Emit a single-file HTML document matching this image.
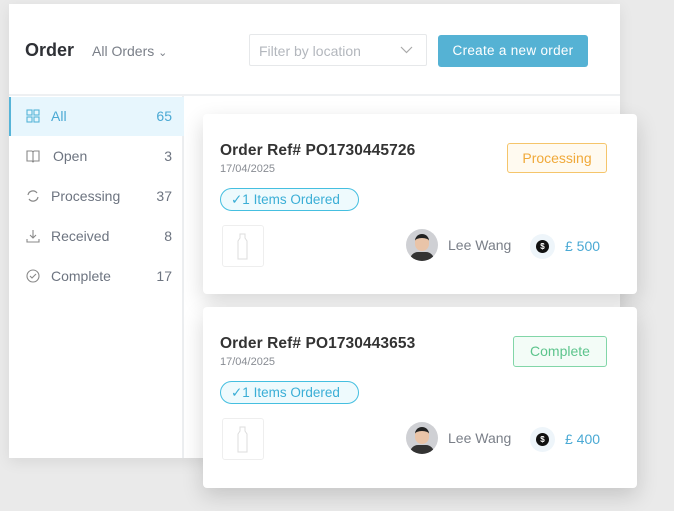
<!DOCTYPE html>
<html><head><style>
*{margin:0;padding:0;box-sizing:border-box}
body{width:674px;height:511px;background:#eaeaea;font-family:"Liberation Sans",sans-serif;position:relative;overflow:hidden}
.abs{position:absolute}
.panel{left:9px;top:4px;width:611px;height:454px;background:#fff;box-shadow:0 4px 14px rgba(0,0,0,.08)}
.hdr{left:0;top:0;width:611px;height:92px;border-bottom:2px solid #eef0f2}
.side{left:0;top:92px;width:175px;height:362px;border-right:2px solid #eceef0}
.item{position:absolute;left:0;width:175px;height:39px;font-size:14px;color:#6d7480}
.item .ic{position:absolute;left:17px;top:12px;width:14px;height:14px}
.item .lb{position:absolute;left:42px;top:11px}
.item .ct{position:absolute;right:12px;top:11px}
.card{left:203px;width:434px;background:#fff;border-radius:4px;box-shadow:0 8px 22px rgba(0,0,0,.16)}
.ref{position:absolute;left:17px;top:28px;font-size:15.5px;color:#333;font-weight:bold;letter-spacing:.1px}
.date{position:absolute;left:17px;top:49px;font-size:11px;color:#888c93}
.pill{position:absolute;left:17px;top:74px;width:139px;height:23px;border:1px solid #45bfe0;background:#eefafd;border-radius:12px;color:#3aaed6;font-size:13.5px;padding:3px 0 0 10px}
.bottle{position:absolute;left:19px;top:111px;width:42px;height:42px;border:1px solid #eee;border-radius:3px}
.av{position:absolute;left:203px;top:115px;width:32px;height:32px;border-radius:50%;background:#cfd0d4;overflow:hidden}
.nm{position:absolute;left:245px;top:123px;font-size:14px;color:#7a7f88}
.dc{position:absolute;left:327px;top:120px;width:25px;height:25px;border-radius:50%;background:#eef5fa}
.dc i{position:absolute;left:6px;top:6px;width:13px;height:13px;border-radius:50%;background:#111;color:#fff;font-size:8px;font-style:normal;text-align:center;line-height:13px;font-weight:bold}
.amt{position:absolute;left:362px;top:124px;font-size:14px;color:#4aa9d4}
</style></head><body>
<div class="abs panel">
 <div class="abs hdr">
  <div class="abs" style="left:16px;top:36px;font-size:18px;font-weight:bold;color:#2f3136">Order</div>
  <div class="abs" style="left:83px;top:39px;font-size:14px;color:#7a7f88">All Orders <span style="font-size:11px">&#8964;</span></div>
  <div class="abs" style="left:240px;top:30px;width:178px;height:32px;border:1px solid #e6e8ea;border-radius:2px;font-size:14px;color:#b3b7bd;padding:8px 0 0 9px">Filter by location
   <svg class="abs" style="left:150px;top:11px" width="13" height="8"><path d="M1 1l5.5 5.5L12 1" fill="none" stroke="#aaa" stroke-width="1.2"/></svg></div>
  <div class="abs" style="left:429px;top:31px;width:150px;height:32px;background:#55b2d4;border-radius:3px;color:#fff;font-size:13.5px;text-align:center;line-height:32px;letter-spacing:.3px">Create a new order</div>
 </div>
 <div class="abs side">
  <div class="item" style="top:1px;background:#e7f6fd;border-left:2px solid #56b4d8;color:#4aa9d4">
   <svg class="ic" viewBox="0 0 14 14" style="left:15px"><g fill="none" stroke="#56b4d8" stroke-width="1.1"><rect x="1" y="1" width="5" height="5"/><rect x="8" y="1" width="5" height="5"/><rect x="1" y="8" width="5" height="5"/><rect x="8" y="8" width="5" height="5"/></g></svg>
   <span class="lb" style="left:40px">All</span><span class="ct">65</span></div>
  <div class="item" style="top:41px"><svg class="ic" viewBox="0 0 14 14"><path d="M1 2h5l1 1 1-1h5v10H8l-1 1-1-1H1z M7 3v10" fill="none" stroke="#888" stroke-width="1.1"/></svg><span class="lb" style="left:44px">Open</span><span class="ct">3</span></div>
  <div class="item" style="top:81px"><svg class="ic" viewBox="0 0 14 14"><path d="M2 6a5 5 0 0 1 9-2 M12 8a5 5 0 0 1-9 2" fill="none" stroke="#888" stroke-width="1.2"/></svg><span class="lb">Processing</span><span class="ct">37</span></div>
  <div class="item" style="top:121px"><svg class="ic" viewBox="0 0 14 14"><path d="M7 1v8M4 6l3 3 3-3M1 10v3h12v-3" fill="none" stroke="#888" stroke-width="1.1"/></svg><span class="lb">Received</span><span class="ct">8</span></div>
  <div class="item" style="top:161px"><svg class="ic" viewBox="0 0 14 14"><circle cx="7" cy="7" r="6" fill="none" stroke="#888" stroke-width="1.1"/><path d="M4 7l2 2 4-4" fill="none" stroke="#888" stroke-width="1.1"/></svg><span class="lb">Complete</span><span class="ct">17</span></div>
 </div>
</div>

<div class="abs card" style="top:114px;height:180px">
 <div class="ref">Order Ref# PO1730445726</div><div class="date">17/04/2025</div>
 <div class="abs" style="left:304px;top:29px;width:100px;height:30px;border:1px solid #f5c56b;background:#fffaf0;border-radius:3px;color:#f0a93a;font-size:14px;text-align:center;line-height:28px">Processing</div>
 <div class="pill">✓1 Items Ordered</div>
 <div class="bottle"><svg width="40" height="40"><path d="M17 8h5v4l2 3v18h-9V15l2-3z" fill="none" stroke="#ddd"/></svg></div>
 <div class="av"><div style="position:absolute;left:9px;top:5px;width:14px;height:17px;border-radius:7px;background:#e9c4a8;border-top:4px solid #222"></div><div style="position:absolute;left:4px;top:23px;width:24px;height:12px;border-radius:8px 8px 0 0;background:#333"></div></div>
 <div class="nm">Lee Wang</div>
 <div class="dc"><i>$</i></div><div class="amt">£ 500</div>
</div>

<div class="abs card" style="top:307px;height:181px">
 <div class="ref">Order Ref# PO1730443653</div><div class="date">17/04/2025</div>
 <div class="abs" style="left:310px;top:29px;width:94px;height:31px;border:1px solid #82d6a8;background:#f3fcf7;border-radius:3px;color:#5cc48c;font-size:14px;text-align:center;line-height:29px">Complete</div>
 <div class="pill">✓1 Items Ordered</div>
 <div class="bottle"><svg width="40" height="40"><path d="M17 8h5v4l2 3v18h-9V15l2-3z" fill="none" stroke="#ddd"/></svg></div>
 <div class="av"><div style="position:absolute;left:9px;top:5px;width:14px;height:17px;border-radius:7px;background:#e9c4a8;border-top:4px solid #222"></div><div style="position:absolute;left:4px;top:23px;width:24px;height:12px;border-radius:8px 8px 0 0;background:#333"></div></div>
 <div class="nm">Lee Wang</div>
 <div class="dc"><i>$</i></div><div class="amt">£ 400</div>
</div>
</body></html>
